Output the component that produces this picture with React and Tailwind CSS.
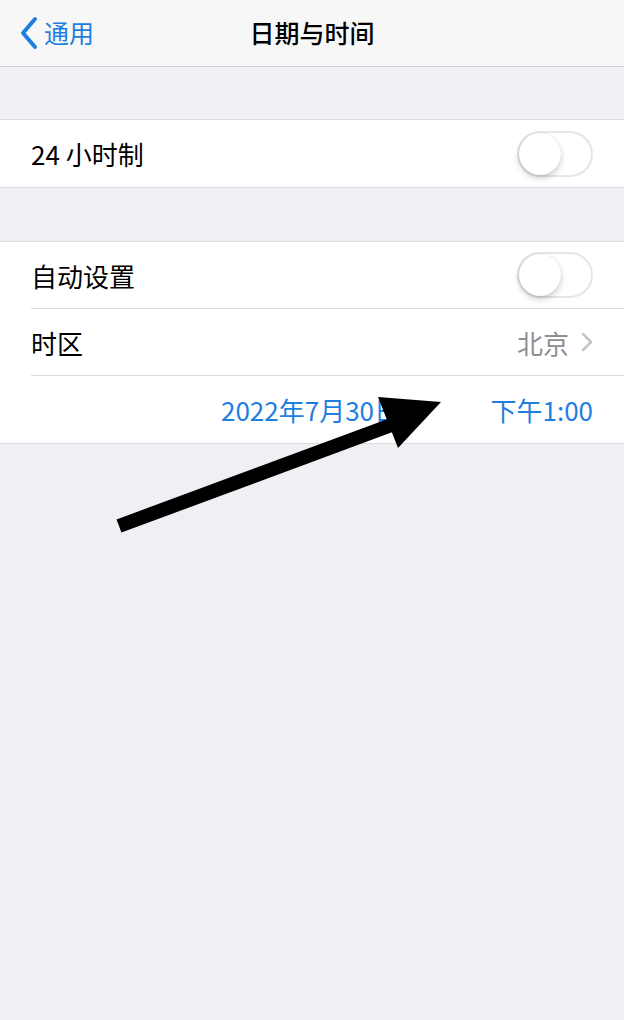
import React from "react";

const font = { fontFamily: '"Noto Sans CJK SC", "Noto Sans", sans-serif' };

const Toggle = () => (
  <div className="relative w-[76px] h-[46px] rounded-full border-2 border-[#e5e5ea] bg-white">
    <div className="absolute left-0 top-0 w-[42px] h-[42px] rounded-full bg-white shadow-[0_3px_6px_rgba(0,0,0,0.2),0_0_1px_rgba(0,0,0,0.15)]" />
  </div>
);

const Row = ({ children, divider }) => (
  <div className="pl-[31px]">
    <div className={"h-[67px] flex items-center pr-[31px] " + (divider ? "border-b border-[#dcdce0]" : "")}>
      {children}
    </div>
  </div>
);

export default function App() {
  return (
    <div className="relative w-[624px] h-[1020px] bg-[#efeff4] overflow-hidden" style={font}>
      <div className="h-[67px] bg-[#f7f7f8] border-b border-[#cfcfd3] flex items-center relative">
        <div className="flex items-center pl-[18px] text-[#1f7fe0] text-[25px]">
          <svg width="22" height="34" viewBox="0 0 22 34" className="mr-[4px]">
            <path d="M17 3 L5 17 L17 31" fill="none" stroke="#1f7fe0" strokeWidth="4" strokeLinecap="round" strokeLinejoin="round" />
          </svg>
          <span>通用</span>
        </div>
        <div className="absolute inset-0 flex items-center justify-center text-[25px] font-medium text-black">
          日期与时间
        </div>
      </div>

      <div className="h-[52px]" />

      <div className="bg-white border-y border-[#dcdce0]">
        <Row>
          <span className="text-[26px] text-black flex-1">24 小时制</span>
          <Toggle />
        </Row>
      </div>

      <div className="h-[53px]" />

      <div className="bg-white border-y border-[#dcdce0]">
        <Row divider>
          <span className="text-[26px] text-black flex-1">自动设置</span>
          <Toggle />
        </Row>
        <Row divider>
          <span className="text-[26px] text-black flex-1">时区</span>
          <span className="text-[26px] text-[#8e8e93] mr-[12px]">北京</span>
          <svg width="12" height="20" viewBox="0 0 12 20">
            <path d="M2 2 L10 10 L2 18" fill="none" stroke="#c4c4c9" strokeWidth="2.5" strokeLinecap="round" strokeLinejoin="round" />
          </svg>
        </Row>
        <Row>
          <span className="ml-[190px] text-[26px] text-[#1f7fe0]">2022年7月30日</span>
          <span className="ml-auto text-[26px] text-[#1f7fe0]">下午1:00</span>
        </Row>
      </div>

      <svg className="absolute left-0 top-0" width="624" height="1020" viewBox="0 0 624 1020">
        <line x1="119" y1="526" x2="405" y2="420" stroke="#000" strokeWidth="14" />
        <polygon points="378,397 441,402 398,448" fill="#000" />
      </svg>
    </div>
  );
}
